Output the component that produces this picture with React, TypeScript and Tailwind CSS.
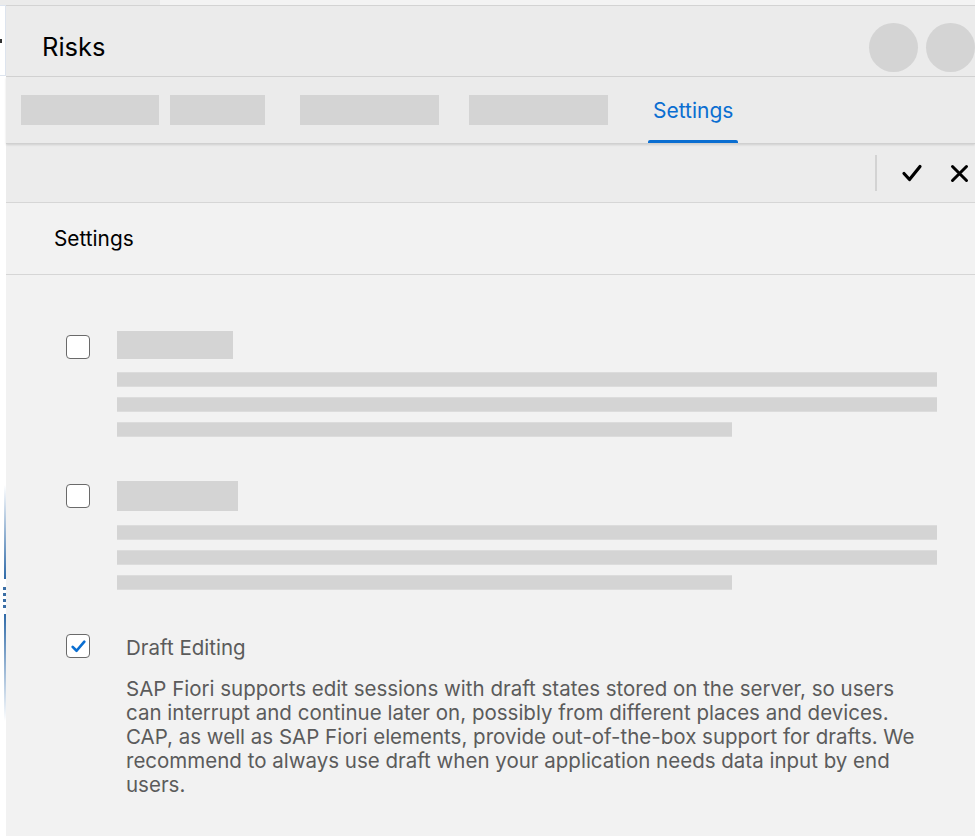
import React from "react";

const font = { fontFamily: "Inter, 'Noto Sans', sans-serif" };

const Bar = ({ className }: { className: string }) => (
  <div className={`bg-[#d4d4d4] ${className}`} />
);

const SkeletonOption = ({ titleClass, linesClass }: { titleClass: string; linesClass: string }) => (
  <div className="flex items-start">
    <div className="mt-[4px] h-[24px] w-[24px] rounded-[4px] border border-[#6a6a6a] bg-white" />
    <div className="ml-[27px] flex flex-1 flex-col">
      <Bar className={titleClass} />
      <div className={`flex flex-col gap-[10px] ${linesClass}`}>
        <Bar className="h-[15px] w-[820px] border-y border-[#dcdcdc]" />
        <Bar className="h-[15px] w-[820px] border-y border-[#dcdcdc]" />
        <Bar className="h-[15px] w-[615px] border-y border-[#dcdcdc]" />
      </div>
    </div>
  </div>
);

export default function App() {
  return (
    <div className="h-[836px] w-[975px] overflow-hidden bg-[#f2f2f2]" style={font}>
      <div className="flex h-[5px]">
        <div className="w-[160px] bg-[#ebebeb]" />
        <div className="flex-1 bg-[#f3f3f3]" />
      </div>
      <div className="flex h-[831px]">
        {/* background app edge */}
        <div className="flex w-[6px] flex-col bg-white">
          <div className="flex h-[71px] items-center border border-l-0 border-[#dde4ee]">
            <div className="h-[4px] w-[2px] bg-[#333]" />
          </div>
          <div className="h-[409px]" />
          <div className="ml-auto h-[94px] w-[2px] bg-gradient-to-b from-transparent to-[#2f6aa8]" />
          <div className="ml-[3px] mt-[8px] flex flex-col gap-[3px]">
            <div className="h-[3px] w-[3px] bg-[#3a6ea5]" />
            <div className="h-[3px] w-[3px] bg-[#3a6ea5]" />
            <div className="h-[3px] w-[3px] bg-[#3a6ea5]" />
            <div className="h-[3px] w-[3px] bg-[#3a6ea5]" />
          </div>
          <div className="ml-auto mt-[6px] h-[107px] w-[2px] bg-gradient-to-b from-[#2f6aa8] to-transparent" />
        </div>

        {/* dialog */}
        <div className="flex flex-1 flex-col">
          <div className="flex h-[72px] items-center justify-between border-y border-[#d3d3d3] bg-[#ebebeb] pt-[12px]">
            <h1 className="pl-[36px] text-[25.5px] text-black">Risks</h1>
            <div className="flex gap-[8px]">
              <div className="h-[49px] w-[49px] rounded-full bg-[#d4d4d4]" />
              <div className="h-[49px] w-[49px] rounded-full bg-[#d4d4d4]" />
            </div>
          </div>

          <div className="relative z-10 flex h-[67px] items-stretch border-b border-[#d0d0d0] bg-[#ebebeb] pl-[15px] shadow-[0_1px_2px_rgba(0,0,0,0.12)]">
            <div className="flex items-center">
              <Bar className="h-[30px] w-[138px]" />
              <Bar className="ml-[11px] h-[30px] w-[95px]" />
              <Bar className="ml-[35px] h-[30px] w-[139px]" />
              <Bar className="ml-[30px] h-[30px] w-[139px]" />
            </div>
            <div className="ml-[40px] flex flex-col">
              <div className="flex flex-1 items-center px-[5px] pt-[4px] text-[21px] text-[#0a6ed1]">
                Settings
              </div>
              <div className="h-[3px] rounded-t-[2px] bg-[#0a6ed1]" />
            </div>
          </div>

          <div className="flex h-[59px] items-center justify-end border-b border-[#d6d6d6] bg-[#ececec]">
            <div className="h-[36px] w-[2px] bg-[#d3d3d3]" />
            <svg className="ml-[24px]" width="22" height="22" viewBox="0 0 22 22" fill="none">
              <path d="M3 11.5 L8.5 17.5 L19 4.5" stroke="#000" strokeWidth="3.2" strokeLinecap="round" strokeLinejoin="round" />
            </svg>
            <svg className="ml-[27px] mr-[6px]" width="19" height="19" viewBox="0 0 19 19" fill="none">
              <path d="M2.5 2.5 L16.5 16.5 M16.5 2.5 L2.5 16.5" stroke="#000" strokeWidth="3" strokeLinecap="round" />
            </svg>
          </div>

          <div className="flex h-[72px] items-center border-b border-[#d6d6d6] bg-[#f2f2f2] pl-[48px] text-[20.8px] text-black">
            Settings
          </div>

          <div className="flex flex-col bg-[#f2f2f2] pl-[60px] pt-[56px]">
            <SkeletonOption titleClass="h-[28px] w-[116px]" linesClass="mt-[13px]" />
            <div className="mt-[43px]">
              <SkeletonOption titleClass="mt-[1px] h-[30px] w-[121px]" linesClass="mt-[14px]" />
            </div>
            <div className="mt-[44px] flex items-start">
              <div className="flex h-[24px] w-[24px] items-center justify-center rounded-[4px] border border-[#6a6a6a] bg-white">
                <svg width="17" height="17" viewBox="0 0 16 16" fill="none">
                  <path d="M2.5 8.3 L6.2 12 L13.5 3.5" stroke="#0a6ed1" strokeWidth="2.5" strokeLinecap="round" strokeLinejoin="round" />
                </svg>
              </div>
              <div className="ml-[36px] flex w-[795px] flex-col text-[#5b5b5b]">
                <div className="text-[20.5px] leading-[28px]">Draft Editing</div>
                <p className="mt-[15px] text-[20.5px] leading-[24px]">
                  SAP Fiori supports edit sessions with draft states stored on the server, so users can interrupt and continue later on, possibly from different places and devices. CAP, as well as SAP Fiori elements, provide out-of-the-box support for drafts. We recommend to always use draft when your application needs data input by end users.
                </p>
              </div>
            </div>
          </div>
        </div>
      </div>
    </div>
  );
}
